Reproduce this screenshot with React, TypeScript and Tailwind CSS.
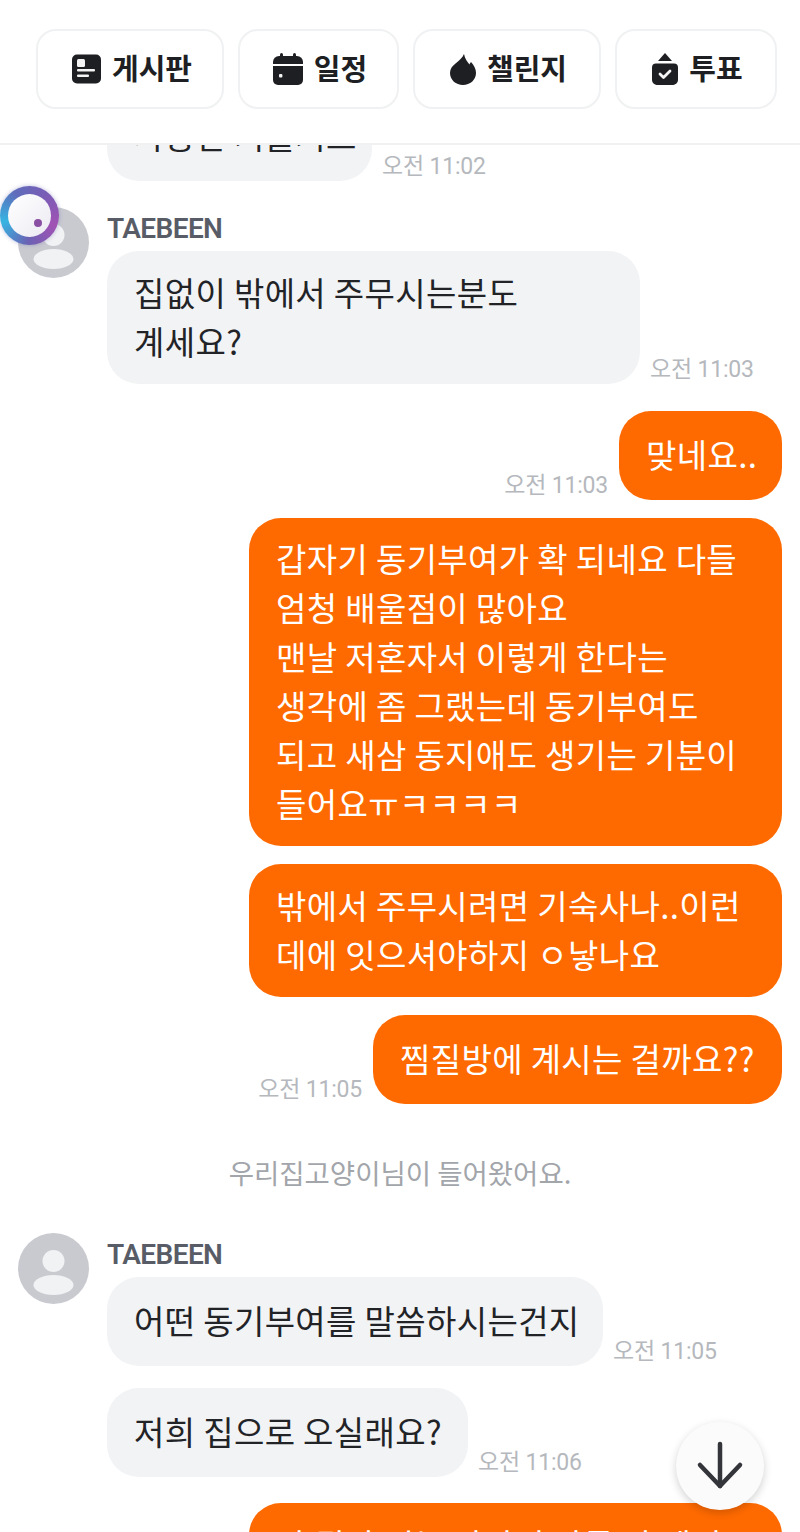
const fontBody = "font-['Noto_Sans_CJK_KR','Noto_Sans',sans-serif]";

const BoardIcon = () => (
  <svg width="30" height="30" viewBox="0 0 30 30">
    <rect x="1" y="0.5" width="29" height="29" rx="5" fill="#1e1f23" />
    <rect x="6" y="5" width="8" height="8" rx="1.5" fill="#f4f4f4" />
    <rect x="6" y="15" width="18" height="2.6" rx="1" fill="#f4f4f4" />
    <rect x="6" y="20.5" width="12" height="2.6" rx="1" fill="#f4f4f4" />
  </svg>
);

const CalendarIcon = () => (
  <svg width="30" height="32" viewBox="0 0 30 32">
    <rect x="7" y="0" width="3" height="6" rx="1.5" fill="#1e1f23" />
    <rect x="20" y="0" width="3" height="6" rx="1.5" fill="#1e1f23" />
    <path d="M0 9a6 6 0 0 1 6-6h18a6 6 0 0 1 6 6v2H0z" fill="#1e1f23" />
    <path d="M0 13h30v14a5 5 0 0 1-5 5H5a5 5 0 0 1-5-5z" fill="#1e1f23" />
    <rect x="6" y="21" width="3.4" height="3.4" rx="1" fill="#f4f4f4" />
  </svg>
);

const FlameIcon = () => (
  <svg width="26" height="31" viewBox="0 0 26 31">
    <path
      d="M14 0C15 5 17.500 8 19.500 10.500C20 9 20.500 8.500 21 8C24 11 26 15 26 19C26 26 20 31 13 31C6 31 0 26 0 19C0 10 11 8 14 0z"
      fill="#1e1f23"
    />
  </svg>
);

const VoteIcon = () => (
  <svg width="26" height="32" viewBox="0 0 26 32">
    <path d="M13 0l7 8H6z" fill="#1e1f23" />
    <path
      d="M4 10.500h18a4 4 0 0 1 4 4V27c0 3-3 5-6 5H6c-3 0-6-2-6-5V14.500a4 4 0 0 1 4-4z"
      fill="#1e1f23"
    />
    <path d="M8 21l3.500 3.500 6.500-6.500" fill="none" stroke="#f6f6f6" strokeWidth="2.800" strokeLinecap="round" strokeLinejoin="round" />
  </svg>
);

const Avatar = () => (
  <svg width="71" height="71" viewBox="0 0 71 71" className="shrink-0">
    <circle cx="35.500" cy="35.500" r="35.500" fill="#c9cad0" />
    <circle cx="35.500" cy="28" r="11" fill="#f1f2f4" />
    <ellipse cx="35.500" cy="52" rx="20" ry="10" fill="#f1f2f4" />
  </svg>
);

const Time = ({ children }: { children: string }) => (
  <span className="font-['Roboto','Noto_Sans_CJK_KR',sans-serif] text-[23px] leading-[28px] tracking-[-0.2px] text-[#b5b8bd] whitespace-nowrap">
    {children}
  </span>
);

const Bubble = ({ mine, lines, size }: { mine?: boolean; lines: string[]; size?: string }) => (
  <div
    className={`min-h-[89px] flex flex-col justify-center rounded-[32px] px-[27px] pt-[16px] pb-[18px] text-[33px] tracking-[0.36px] leading-[49px] whitespace-nowrap ${size ?? ''} ${
      mine ? 'bg-[#ff6a00] text-white' : 'bg-[#f2f3f5] text-[#222327]'
    }`}
  >
    {lines.map((line, i) => (
      <div key={i}>{line}</div>
    ))}
  </div>
);

const Name = () => (
  <div className="h-[44px] flex items-center font-['Roboto',sans-serif] text-[28px] font-semibold tracking-[-0.6px] text-[#585c66]">
    TAEBEEN
  </div>
);

const Mine = ({ lines, time, size, className }: { lines: string[]; time?: string; size?: string; className: string }) => (
  <div className={`flex items-end justify-end gap-[11px] pr-[18px] ${className}`}>
    {time && <Time>{time}</Time>}
    <Bubble mine lines={lines} size={size} />
  </div>
);

const Theirs = ({ lines, time, size, className }: { lines: string[]; time: string; size?: string; className: string }) => (
  <div className={`flex items-end gap-[10px] pl-[107px] ${className}`}>
    <Bubble lines={lines} size={size} />
    <Time>{time}</Time>
  </div>
);

const tabs = [
  { label: '게시판', icon: <BoardIcon />, width: 'w-[188px]' },
  { label: '일정', icon: <CalendarIcon />, width: 'w-[161px]' },
  { label: '챌린지', icon: <FlameIcon />, width: 'w-[188px]' },
  { label: '투표', icon: <VoteIcon />, width: 'w-[162px]' },
];

export default function App() {
  return (
    <div className={`relative w-[800px] h-[1532px] overflow-hidden bg-white flex flex-col ${fontBody}`}>
      {/* Top tabs */}
      <header className="h-[145px] shrink-0 flex gap-[14px] pl-[36px] pt-[29px] border-b-2 border-[#f1f1f2] bg-white">
        {tabs.map((tab) => (
          <button
            key={tab.label}
            className={`h-[80px] ${tab.width} flex items-center justify-center gap-[11px] pl-[3px] rounded-[20px] border-2 border-[#f0f1f2] text-[29px] leading-[36px] font-bold text-[#1e1f23]`}
          >
            {tab.icon}
            <span className="-mt-[5px]">{tab.label}</span>
          </button>
        ))}
      </header>

      {/* Messages */}
      <main className="flex-1 overflow-hidden flex flex-col">
        <Theirs className="-mt-[53px]" size="w-[265px]" lines={['사용한 기를거르']} time="오전 11:02" />

        <div className="flex gap-[18px] pl-[18px] mt-[26px]">
          <Avatar />
          <div className="flex flex-col">
            <Name />
            <div className="flex items-end gap-[10px]">
              <Bubble lines={['집없이 밖에서 주무시는분도', '계세요?']} size="w-[533px] h-[133px]" />
              <Time>오전 11:03</Time>
            </div>
          </div>
        </div>

        <Mine className="mt-[27px]" size="w-[163px]" lines={['맞네요..']} time="오전 11:03" />
        <Mine
          className="mt-[18px]"
          size="w-[533px]"
          lines={[
            '갑자기 동기부여가 확 되네요 다들',
            '엄청 배울점이 많아요',
            '맨날 저혼자서 이렇게 한다는',
            '생각에 좀 그랬는데 동기부여도',
            '되고 새삼 동지애도 생기는 기분이',
            '들어요ㅠㅋㅋㅋㅋ',
          ]}
        />
        <Mine
          className="mt-[18px]"
          size="w-[533px] h-[133px]"
          lines={['밖에서 주무시려면 기숙사나..이런', '데에 잇으셔야하지 ㅇ낳나요']}
        />
        <Mine className="mt-[18px]" size="w-[409px]" lines={['찜질방에 계시는 걸까요??']} time="오전 11:05" />

        <div className="mt-[50px] h-[38px] flex items-center justify-center text-[27.5px] text-[#a2a5aa]">
          우리집고양이님이 들어왔어요.
        </div>

        <div className="flex gap-[18px] pl-[18px] mt-[41px]">
          <Avatar />
          <div className="flex flex-col">
            <Name />
            <div className="flex items-end gap-[10px]">
              <Bubble size="w-[496px]" lines={['어떤 동기부여를 말씀하시는건지']} />
              <Time>오전 11:05</Time>
            </div>
          </div>
        </div>
        <Theirs className="mt-[22px]" size="w-[361px]" lines={['저희 집으로 오실래요?']} time="오전 11:06" />
        <Mine className="mt-[26px]" size="w-[533px] !pt-[11px]" lines={['아 뭔가 저는 사람이 다들 잘 계신']} />
      </main>

      {/* Floating touch pointer */}
      <div className="absolute left-0 top-[186px] w-[59px] h-[59px] rounded-full p-[8px] bg-[conic-gradient(from_40deg,#7a5cb5,#a152b4,#6a62b4,#36b4e2,#5f6cbb,#7a5cb5)] shadow-[0_0_4px_rgba(90,90,170,0.4)]">
        <div className="relative w-full h-full rounded-full bg-gradient-to-br from-white to-[#eceaf2]">
          <div className="absolute left-[26px] top-[25px] w-[8px] h-[8px] rounded-full bg-[#8a4fa3]" />
        </div>
      </div>

      {/* Scroll to bottom */}
      <button className="absolute left-[676px] top-[1422px] w-[88px] h-[88px] rounded-full bg-[#fbfbfb] shadow-[0_3px_8px_rgba(0,0,0,0.18)] flex items-center justify-center">
        <svg width="48" height="50" viewBox="0 0 48 50" fill="none" stroke="#33353a" strokeWidth="4.500" strokeLinecap="round" strokeLinejoin="round">
          <path d="M24 3v42" />
          <path d="M4 24l20 21 20-21" />
        </svg>
      </button>
    </div>
  );
}
